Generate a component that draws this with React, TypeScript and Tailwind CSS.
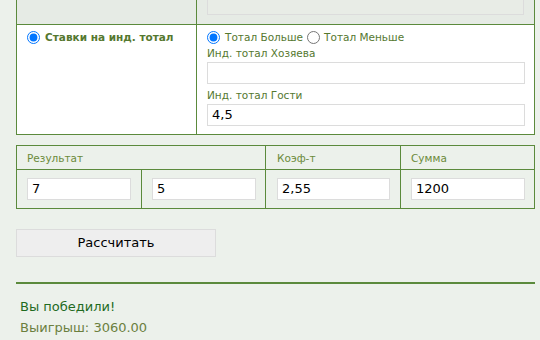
const font = { fontFamily: '"DejaVu Sans", Verdana, sans-serif' };

function TextInput({ value, className = "" }: { value?: string; className?: string }) {
  return (
    <input
      type="text"
      defaultValue={value}
      className={`block h-[22px] border border-[#dcdcdc] bg-white px-[4px] text-[13px] text-black outline-none ${className}`}
    />
  );
}

function Radio({ checked }: { checked?: boolean }) {
  return (
    <input
      type="radio"
      defaultChecked={checked}
      className="m-0 h-[13px] w-[13px] shrink-0 accent-[#0075ff]"
    />
  );
}

export default function App() {
  return (
    <div className="h-[340px] w-[540px] overflow-hidden bg-[#ecf1eb] pl-4" style={font}>
      <table className="w-[519px] table-fixed border-collapse">
        <colgroup>
          <col className="w-[180px]" />
          <col />
        </colgroup>
        <tbody>
          <tr className="h-[24px]">
            <td className="border border-t-0 border-[#5b8a3c] bg-[#e6ebe5] p-0" />
            <td className="border border-t-0 border-[#5b8a3c] bg-[#e6ebe5] px-[10px] py-0 align-top">
              <div className="h-[15px] border border-t-0 border-[#dcdcdc] bg-[#e8ece6]" />
            </td>
          </tr>
          <tr className="h-[110px]">
            <td className="border border-[#5b8a3c] bg-white px-[10px] pt-[6px] align-top">
              <label className="flex h-[13px] items-center gap-[5px] text-[10.5px] leading-[13px] font-bold text-[#55782f]">
                <Radio checked />
                Ставки на инд. тотал
              </label>
            </td>
            <td className="border border-[#5b8a3c] bg-white px-[10px] pt-[6px] pb-[8px] align-top text-[10.5px] leading-[13px] text-[#55782f]">
              <div className="flex h-[13px] items-center">
                <Radio checked />
                <span className="ml-[5px]">Тотал Больше</span>
                <span className="ml-[4px] flex"><Radio /></span>
                <span className="ml-[4px]">Тотал Меньше</span>
              </div>
              <div className="mt-[3px] h-[13px]">Инд. тотал Хозяева</div>
              <TextInput className="mt-[2px] w-[318px]" />
              <div className="mt-[5px] h-[13px]">Инд. тотал Гости</div>
              <TextInput value="4,5" className="mt-[2px] w-[318px]" />
            </td>
          </tr>
        </tbody>
      </table>

      <table className="mt-[10px] w-[519px] table-fixed border-collapse text-[10.5px] text-[#6b8a3a]">
        <colgroup>
          <col className="w-[125px]" />
          <col className="w-[124px]" />
          <col className="w-[135px]" />
          <col />
        </colgroup>
        <tbody>
          <tr className="h-[24px]">
            <td colSpan={2} className="border border-[#5b8a3c] px-[10px] pt-[3px]">Результат</td>
            <td className="border border-[#5b8a3c] px-[11px] pt-[3px]">Коэф-т</td>
            <td className="border border-[#5b8a3c] px-[10px] pt-[3px]">Сумма</td>
          </tr>
          <tr className="h-[39px]">
            <td className="border border-[#5b8a3c] px-[10px]">
              <TextInput value="7" className="w-[104px]" />
            </td>
            <td className="border border-[#5b8a3c] px-[10px]">
              <TextInput value="5" className="w-[104px]" />
            </td>
            <td className="border border-[#5b8a3c] px-[11px]">
              <TextInput value="2,55" className="w-[113px]" />
            </td>
            <td className="border border-[#5b8a3c] px-[10px]">
              <TextInput value="1200" className="w-[114px]" />
            </td>
          </tr>
        </tbody>
      </table>

      <button
        type="button"
        className="mt-[20px] block h-[28px] w-[200px] border border-[#dcdcdc] bg-[#eeeeee] text-[13px] text-black"
      >
        Рассчитать
      </button>

      <div className="mt-[25px] h-[2px] w-[519px] bg-[#5b8a3c]" />

      <div className="mt-[12px] pl-[4px] text-[13px] leading-[21px]">
        <div className="text-[#1f6b1f]">Вы победили!</div>
        <div className="text-[#6b7f3e]">Выигрыш: 3060.00</div>
      </div>
    </div>
  );
}
